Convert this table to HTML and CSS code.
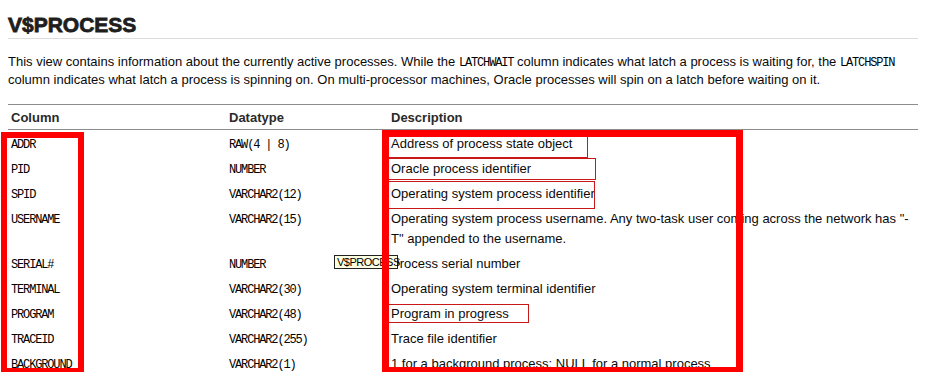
FILE: index.html
```html
<!DOCTYPE html>
<html lang="en">
<head>
<meta charset="utf-8">
<title>V$PROCESS</title>
<link rel="stylesheet" href="styles.css">
</head>
<body>
<div class="page">
  <h1 class="title">V$PROCESS</h1>
  <p class="intro">This view contains information about the currently active processes. While the <code>LATCHWAIT</code> column indicates what latch a process is waiting for, the <code>LATCHSPIN</code> column indicates what latch a process is spinning on. On multi-processor machines, Oracle processes will spin on a latch before waiting on it.</p>

  <table class="cols">
    <thead>
      <tr><th class="c-name">Column</th><th class="c-type">Datatype</th><th class="c-desc">Description</th></tr>
    </thead>
    <tbody>
      <tr><td><code>ADDR</code></td><td><code>RAW(4 | 8)</code></td><td>Address of process state object</td></tr>
      <tr><td><code>PID</code></td><td><code>NUMBER</code></td><td>Oracle process identifier</td></tr>
      <tr><td><code>SPID</code></td><td><code>VARCHAR2(12)</code></td><td>Operating system process identifier</td></tr>
      <tr><td><code>USERNAME</code></td><td><code>VARCHAR2(15)</code></td><td>Operating system process username. Any two-task user coming across the network has "-T" appended to the username.</td></tr>
      <tr><td><code>SERIAL#</code></td><td><code>NUMBER</code></td><td>Process serial number</td></tr>
      <tr><td><code>TERMINAL</code></td><td><code>VARCHAR2(30)</code></td><td>Operating system terminal identifier</td></tr>
      <tr><td><code>PROGRAM</code></td><td><code>VARCHAR2(48)</code></td><td>Program in progress</td></tr>
      <tr><td><code>TRACEID</code></td><td><code>VARCHAR2(255)</code></td><td>Trace file identifier</td></tr>
      <tr><td><code>BACKGROUND</code></td><td><code>VARCHAR2(1)</code></td><td>1 for a background process; NULL for a normal process</td></tr>
    </tbody>
  </table>

  <!-- hover tooltip from the title link -->
  <div class="tooltip">V$PROCESS</div>

  <!-- review markup drawn over the table -->
  <div class="mark mark-thick mark-names"></div>
  <div class="mark mark-thin mark-addr"></div>
  <div class="mark mark-thin mark-pid"></div>
  <div class="mark mark-thin mark-spid"></div>
  <div class="mark mark-thin mark-program"></div>
  <div class="mark mark-thick mark-descs"></div>
</div>
</body>
</html>
```

FILE: styles.css
```css
html, body {
  margin: 0;
  padding: 0;
  background: #fff;
  overflow: hidden;
}

.page {
  position: relative;
  width: 910px;
  height: 372px;
  padding-left: 8px;
  font-family: "Liberation Sans", Arial, sans-serif;
  font-size: 13px;
  color: #0a0a0a;
}

.title {
  margin: 0;
  padding-top: 12px;
  font-family: "Liberation Sans", Arial, sans-serif;
  font-size: 21px;
  font-weight: 900;
  line-height: 26px;
  color: #1e1e1e;
  border-bottom: 1px solid #dcdcdc;
  -webkit-text-stroke: 0.8px #1e1e1e;
}

.intro {
  margin: 14px 0 0;
  line-height: 18px;
}

code {
  font-family: "Liberation Mono", "Courier New", monospace;
  font-size: 12px;
  line-height: 12px;
  letter-spacing: -1.15px;
  color: #000;
}

.cols {
  margin-top: 15px;
  width: 910px;
  border-collapse: collapse;
  border-top: 1px solid #8c8c8c;
}

.cols th {
  text-align: left;
  font-weight: bold;
  color: #2a2a2a;
  height: 24px;
  padding: 0 0 0 3px;
  border-bottom: 1px solid #8c8c8c;
}

.c-name { width: 215px; }
.c-type { width: 159px; }

.cols td {
  vertical-align: top;
  padding: 4px 3px 1px;
  line-height: 20px;
}

/* tooltip sits under the markup */
.tooltip {
  position: absolute;
  left: 334px;
  top: 255px;
  box-sizing: border-box;
  width: 64px;
  height: 14px;
  padding: 0 0 0 2px;
  background: #ffffe1;
  border: 1px solid #222;
  font-size: 11px;
  line-height: 12px;
  letter-spacing: -0.5px;
  color: #000;
  white-space: nowrap;
}

.mark {
  position: absolute;
  box-sizing: border-box;
}

.mark-thick {
  border: 6px solid #ff0000;
}

.mark-thin {
  border: 1px solid #c81818;
}

.mark-names {
  left: 1px;
  top: 132px;
  width: 83px;
  height: 242px;
}

.mark-descs {
  left: 382px;
  top: 130px;
  width: 361px;
  height: 244px;
  border-width: 7px;
}

.mark-addr {
  left: 384px;
  top: 132px;
  width: 204px;
  height: 26px;
}

.mark-pid {
  left: 384px;
  top: 158px;
  width: 212px;
  height: 22px;
}

.mark-spid {
  left: 384px;
  top: 181px;
  width: 211px;
  height: 28px;
}

.mark-program {
  left: 387px;
  top: 304px;
  width: 142px;
  height: 19px;
}
```
